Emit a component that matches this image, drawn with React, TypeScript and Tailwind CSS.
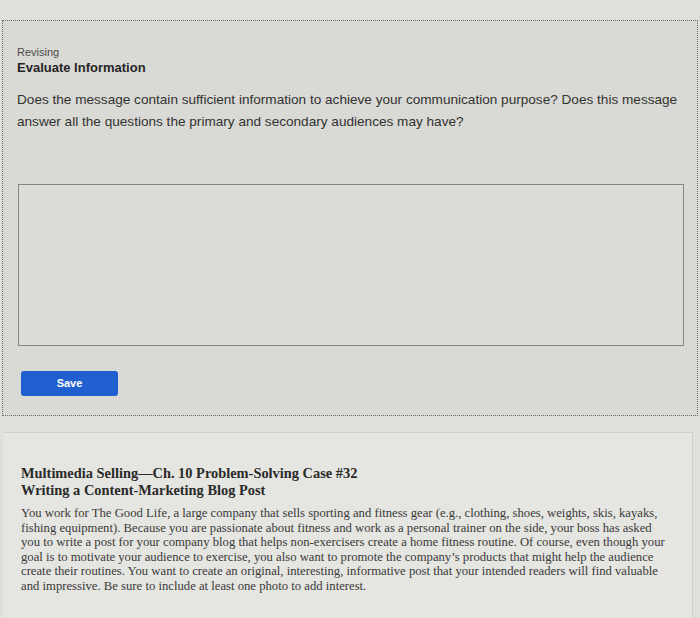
export default function App() {
  const sans = { fontFamily: '"Liberation Sans", Arial, sans-serif' };
  const serif = { fontFamily: '"Liberation Serif", "Times New Roman", serif' };
  const caseLines = [
    "You work for The Good Life, a large company that sells sporting and fitness gear (e.g., clothing, shoes, weights, skis, kayaks,",
    "fishing equipment). Because you are passionate about fitness and work as a personal trainer on the side, your boss has asked",
    "you to write a post for your company blog that helps non-exercisers create a home fitness routine. Of course, even though your",
    "goal is to motivate your audience to exercise, you also want to promote the company\u2019s products that might help the audience",
    "create their routines. You want to create an original, interesting, informative post that your intended readers will find valuable",
    "and impressive. Be sure to include at least one photo to add interest.",
  ];

  return (
    <div className="h-[618px] w-[700px] overflow-hidden bg-[#dfdfdb]">
      <div className="h-[20px]" />
      <section
        className="mx-[2px] h-[396px] border-x border-t border-b border-dotted border-[#6f6f6c] bg-[#d9d9d5] px-[14px] pt-[25px]"
        style={sans}
      >
        <p className="text-[11px] leading-[13px] text-[#4a4a48]">Revising</p>
        <h2 className="mt-[1px] text-[13px] font-bold leading-[16px] text-[#262625]">Evaluate Information</h2>
        <p className="mt-[13px] text-[13.6px] leading-[22px] text-[#333331]">
          Does the message contain sufficient information to achieve your communication purpose? Does this message
          <br />
          answer all the questions the primary and secondary audiences may have?
        </p>
        <div className="mt-[51px] ml-[1px] h-[162px] w-[666px] border border-[#858582] bg-[#dcdcd8]" />
        <button className="mt-[25px] ml-[4px] flex h-[25px] w-[97px] items-center justify-center rounded-[3px] bg-[#1f5fcf] text-[11px] font-bold text-white">
          Save
        </button>
      </section>
      <div className="h-[16px]" />
      <section
        className="ml-[3px] h-[190px] w-[690px] border-t border-r border-[#d0d0cc] bg-[#e5e5e2] pl-[18px] pt-[32px] text-[#2a2a29]"
        style={serif}
      >
        <h3 className="text-[14.4px] font-bold leading-[17px]">Multimedia Selling—Ch. 10 Problem-Solving Case #32</h3>
        <h4 className="text-[14.4px] font-bold leading-[17px]">Writing a Content-Marketing Blog Post</h4>
        <div className="mt-[7px] text-[12.7px] leading-[14.6px] text-[#3a3a38]">
          {caseLines.map((line) => (
            <div key={line} className="whitespace-nowrap">
              {line}
            </div>
          ))}
        </div>
      </section>
    </div>
  );
}
